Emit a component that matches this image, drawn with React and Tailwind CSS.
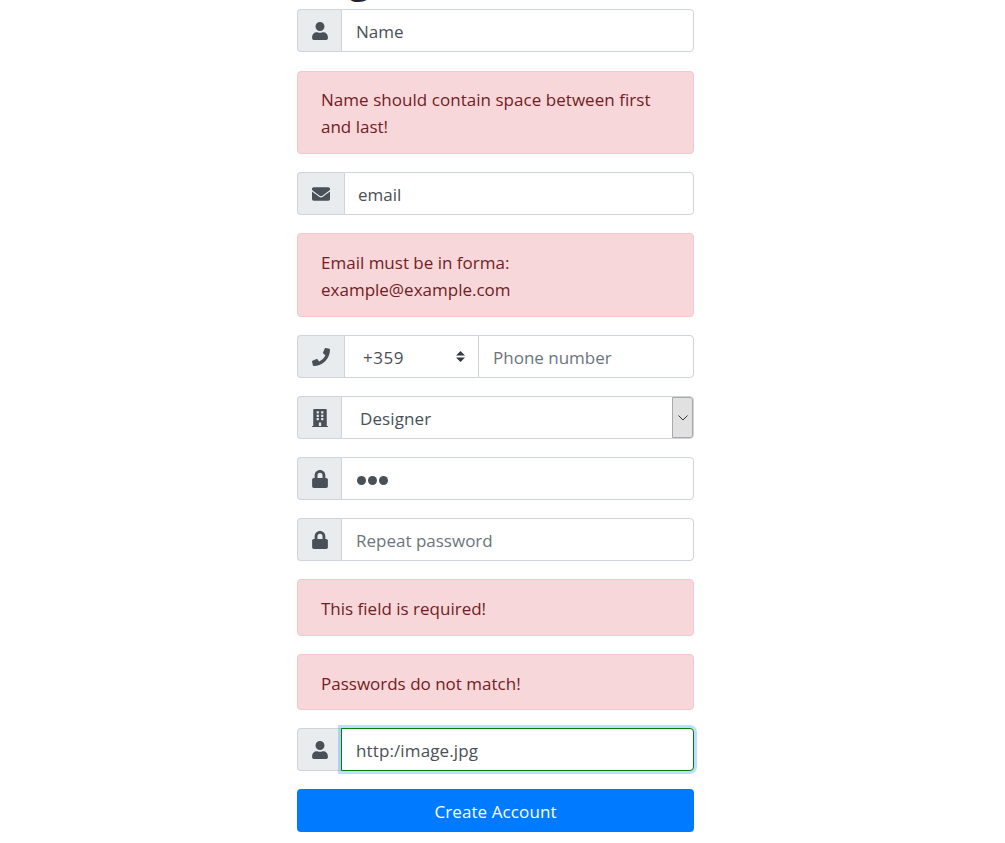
import React from "react";
import { FaUser, FaEnvelope, FaPhone, FaBuilding, FaLock } from "react-icons/fa";

function Row({ icon: Icon, wide, className = "", children }) {
  return (
    <div className={`flex h-[43px] ${className}`}>
      <div
        className={`flex shrink-0 items-center rounded-l-[4px] border border-r-0 border-[#ced4da] bg-[#e9ecef] pl-[14px] text-[#495057] ${wide ? "w-[47px]" : "w-[44px]"}`}
      >
        <Icon className={`h-[18px] ${wide ? "w-[18px]" : "w-[16px]"}`} />
      </div>
      {children}
    </div>
  );
}

function Field({ className = "pl-[14px]", border = "border-[#ced4da]", color = "text-[#495057]", children }) {
  return (
    <div
      className={`flex h-[43px] min-w-0 flex-1 items-center rounded-r-[4px] border bg-white ${border} ${color} ${className}`}
    >
      {children}
    </div>
  );
}

function Alert({ className, children }) {
  return (
    <div
      className={`rounded-[4px] border border-[#f5c6cb] bg-[#f8d7da] pl-[23px] leading-[27px] text-[#721c24] ${className}`}
    >
      {children}
    </div>
  );
}

export default function App() {
  return (
    <div className="h-[843px] w-full overflow-hidden bg-white font-['Open_Sans','Noto_Sans',sans-serif] text-[17px]">
      <form className="ml-[297px] w-[397px]">
        <h1 className="-mt-[51px] h-[60px] pl-[3px] text-[41px] leading-[54px] font-medium text-[#212529]">Register</h1>
        <Row icon={FaUser}>
          <Field><span className="pt-[2px]">Name</span></Field>
        </Row>
        <Alert className="mt-[19px] h-[83px] pt-[14px]">
          <span className="tracking-[0.04px]">Name should contain space between first</span>
          <br />
          <span>and last!</span>
        </Alert>
        <Row icon={FaEnvelope} wide className="mt-[18px]">
          <Field className="pl-[13px]"><span className="pt-[2px]">email</span></Field>
        </Row>
        <Alert className="mt-[18px] h-[84px] pt-[15px]">
          <span>Email must be in forma:</span>
          <br />
          <span>example@example.com</span>
        </Alert>
        <Row icon={FaPhone} wide className="mt-[18px]">
          <div className="flex w-[134px] shrink-0 items-center justify-between border border-r-0 border-[#ced4da] pr-[13px] pl-[18px] text-[#495057]">
            <span className="pt-[2px] tracking-[0.5px]">+359</span>
            <svg viewBox="0 0 4 5" className="h-[11px] w-[9px]" preserveAspectRatio="none">
              <path fill="#343a40" d="M2 0L0 2h4zm0 5L0 3h4z" />
            </svg>
          </div>
          <Field color="text-[#6c757d]"><span className="pt-[2px]">Phone number</span></Field>
        </Row>
        <Row icon={FaBuilding} className="mt-[18px]">
          <Field className="justify-between pl-[18px]">
            <span className="pt-[2px] tracking-[0.1px]">Designer</span>
            <span className="flex h-[41px] w-[21px] items-center justify-center rounded-r-[3px] border border-[#a9a9a9] bg-[#e1e1e1]">
              <svg viewBox="0 0 10 6" className="h-[6px] w-[10px]" fill="none" stroke="#333">
                <path d="M.5.5L5 5 9.500.5" />
              </svg>
            </span>
          </Field>
        </Row>
        <Row icon={FaLock} className="mt-[18px]">
          <Field className="gap-[2px] pt-[4px] pl-[15px]">
            <i className="size-[9px] rounded-full bg-[#495057]" />
            <i className="size-[9px] rounded-full bg-[#495057]" />
            <i className="size-[9px] rounded-full bg-[#495057]" />
          </Field>
        </Row>
        <Row icon={FaLock} className="mt-[18px]">
          <Field color="text-[#6c757d]"><span className="pt-[2px]">Repeat password</span></Field>
        </Row>
        <Alert className="mt-[18px] h-[57px] pt-[15px]"><span>This field is required!</span></Alert>
        <Alert className="mt-[18px] h-[56px] pt-[15px]"><span>Passwords do not match!</span></Alert>
        <Row icon={FaUser} className="mt-[18px]">
          <Field border="border-[green]" className="pl-[14px] shadow-[0_0_0_3px_rgba(0,123,255,0.25)]">
            <span className="pt-[2px] tracking-[0.12px]">http:/image.jpg</span>
          </Field>
        </Row>
        <button type="button" className="mt-[18px] block h-[43px] w-full rounded-[4px] bg-[#007bff] pt-[2px] text-center tracking-[0.1px] text-white">
          Create Account
        </button>
      </form>
    </div>
  );
}
